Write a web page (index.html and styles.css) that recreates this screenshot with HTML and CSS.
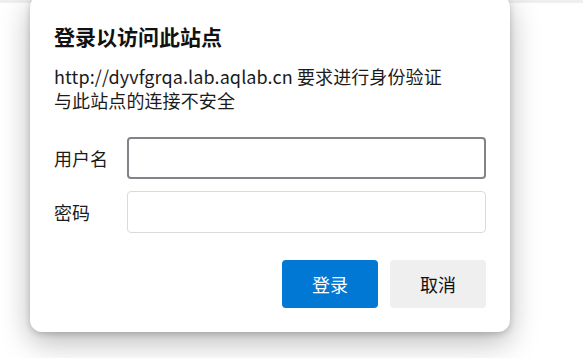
FILE: index.html
```html
<!DOCTYPE html>
<html lang="zh-CN">
<head>
    <meta charset="UTF-8">
    <meta name="viewport" content="width=device-width, initial-scale=1.0">
    <title>登录以访问此站点</title>
    <link rel="stylesheet" href="styles.css">
</head>
<body>
    <div class="topbar"></div>

    <div class="dialog">
        <h2 class="dialog-title">登录以访问此站点</h2>
        <p class="dialog-text">http://dyvfgrqa.lab.aqlab.cn 要求进行身份验证<br>与此站点的连接不安全</p>

        <div class="form">
            <div class="row">
                <label for="username">用户名</label>
                <input type="text" id="username" class="focused">
            </div>
            <div class="row">
                <label for="password">密码</label>
                <input type="password" id="password">
            </div>
        </div>

        <div class="actions">
            <button class="btn primary">登录</button>
            <button class="btn">取消</button>
        </div>
    </div>
</body>
</html>
```

FILE: styles.css
```css
html, body { height: 100%; }

body {
    margin: 0;
    background: #ffffff;
    font-family: "Noto Sans CJK SC", "Noto Sans", sans-serif;
    color: #1b1b1b;
    overflow: hidden;
}

.topbar {
    height: 3px;
    background: #efefef;
}

.dialog {
    width: 480px;
    margin: -8px 0 0 30px;
    padding: 27px 24px 24px;
    box-sizing: border-box;
    background: #ffffff;
    border-radius: 12px;
    box-shadow: 0 10px 30px rgba(0, 0, 0, 0.28), 0 2px 6px rgba(0, 0, 0, 0.18);
}

.dialog-title {
    margin: 0;
    font-size: 21px;
    line-height: 28px;
    font-weight: bold;
    color: #111;
}

.dialog-text {
    margin: 14px 0 0;
    font-size: 18px;
    line-height: 24px;
    letter-spacing: 0.1px;
}

.form {
    margin-top: 25px;
    display: flex;
    flex-direction: column;
    gap: 12px;
}

.row {
    display: grid;
    grid-template-columns: 73px 1fr;
    align-items: center;
}

.row label { font-size: 18px; }

.row input {
    height: 42px;
    box-sizing: border-box;
    border: 1px solid #dadada;
    border-radius: 4px;
    padding: 0 10px;
    font-size: 18px;
    outline: none;
}

.row input.focused { border: 2px solid #808388; }

.actions {
    margin-top: 27px;
    display: flex;
    justify-content: flex-end;
    gap: 12px;
}

.btn {
    width: 96px;
    height: 48px;
    border: none;
    border-radius: 4px;
    background: #efefef;
    color: #111;
    font-family: inherit;
    font-size: 18px;
}

.btn.primary {
    background: #0078d4;
    color: #ffffff;
}
```
